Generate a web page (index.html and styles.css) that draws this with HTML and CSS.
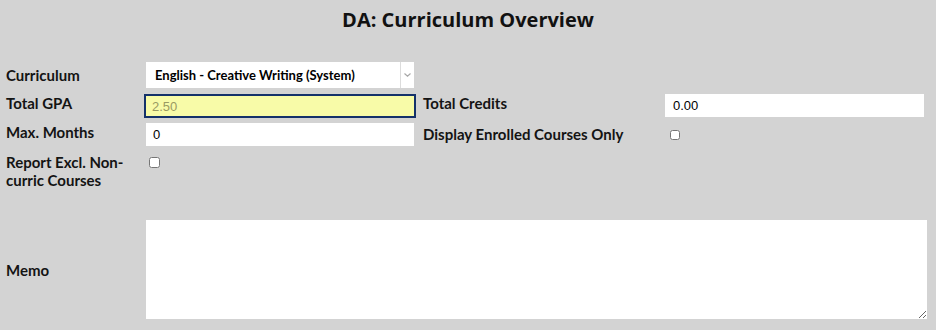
FILE: index.html
```html
<!DOCTYPE html>
<html>
<head>
  <title>DA: Curriculum Overview</title>
  <meta name="viewport" content="width=device-width, initial-scale=1.0">
  <link rel="stylesheet" href="styles.css">
</head>
<body>
  <h1>DA: Curriculum Overview</h1>
  <div class="form">
    <label class="label label-first" for="curriculum">Curriculum</label>
    <div class="select-wrap">
      <select id="curriculum">
        <option>English - Creative Writing (System)</option>
      </select>
      <span class="select-arrow">
        <svg width="7" height="4" viewBox="0 0 7 4"><path d="M0.5 0.5 L3.5 3.2 L6.5 0.5" fill="none" stroke="#a8a8a8" stroke-width="1.2"/></svg>
      </span>
    </div>
    <div class="span-rest"></div>

    <label class="label" for="totalGpa">Total GPA</label>
    <input type="text" id="totalGpa" class="field field-focus" value="2.50" readonly>
    <label class="label label-right" for="totalCredits">Total Credits</label>
    <input type="text" id="totalCredits" class="field" value="0.00">

    <label class="label" for="maxMonths">Max. Months</label>
    <input type="text" id="maxMonths" class="field" value="0">
    <label class="label label-right label-check" for="enrolledOnly">Display Enrolled Courses Only</label>
    <div><input type="checkbox" id="enrolledOnly" class="check check-right"></div>

    <label class="label label-multi" for="reportExcl">Report Excl. Non-curric Courses</label>
    <div><input type="checkbox" id="reportExcl" class="check"></div>
    <div class="span-rest"></div>

    <label class="label label-memo" for="memo">Memo</label>
    <textarea id="memo" class="memo"></textarea>
  </div>
</body>
</html>
```

FILE: styles.css
```css
body {
  margin: 0;
  background-color: #d3d3d3;
  font-family: Lato, "Liberation Sans", sans-serif;
  color: #141414;
}
h1 {
  margin: 0;
  padding-top: 8px;
  height: 62px;
  box-sizing: border-box;
  font-family: "Open Sans", "Liberation Sans", sans-serif;
  font-size: 20px;
  font-weight: 700;
  line-height: 24px;
  text-align: center;
  color: #111;
}
.form {
  display: grid;
  grid-template-columns: 140px 268px 251px 259px;
  align-items: start;
  row-gap: 5px;
  padding-left: 6px;
}
.label {
  font-size: 15px;
  font-weight: 700;
  line-height: 18px;
}
.label-first {
  padding-top: 4px;
}
.label-right {
  padding-left: 9px;
}
.label-check {
  padding-top: 2px;
}
.label-multi {
  padding-top: 1px;
  padding-right: 10px;
  margin-top: 1px;
}
.label-memo {
  align-self: center;
  margin-top: 26px;
}
.span-rest {
  grid-column: 3 / 5;
}
.select-wrap {
  display: flex;
  height: 26px;
  background-color: #fff;
  margin-bottom: 1px;
}
.select-wrap select {
  flex: 1;
  appearance: none;
  border: none;
  outline: none;
  background: transparent;
  padding: 0 0 0 9px;
  font-family: Lato, "Liberation Sans", sans-serif;
  font-size: 13px;
  font-weight: 700;
  color: #000;
}
.select-arrow {
  width: 13px;
  display: flex;
  align-items: center;
  justify-content: center;
  border-left: 1px solid #dcdcdc;
}
.field {
  height: 23px;
  box-sizing: border-box;
  border: none;
  outline: none;
  margin: 0;
  padding: 0 7px;
  background-color: #fff;
  font-family: "Liberation Sans", Arial, sans-serif;
  font-size: 13px;
  color: #000;
}
.field-focus {
  height: 24px;
  margin: 0 -2px;
  width: calc(100% + 4px);
  padding: 0 6px;
  border: 2px solid #14316a;
  background-color: #f8fba8;
  color: #9a9a62;
}
#totalCredits {
  padding-left: 8px;
}
.check {
  width: 11px;
  height: 11px;
  margin: 6px 0 0 3px;
}
.check-right {
  width: 10px;
  height: 10px;
  margin: 7px 0 0 5px;
}
.memo {
  grid-column: 2 / 5;
  width: 781px;
  height: 99px;
  box-sizing: border-box;
  margin-top: 26px;
  border: none;
  outline: none;
  background-color: #fff;
  font-family: "Liberation Sans", Arial, sans-serif;
  font-size: 13px;
}
```
